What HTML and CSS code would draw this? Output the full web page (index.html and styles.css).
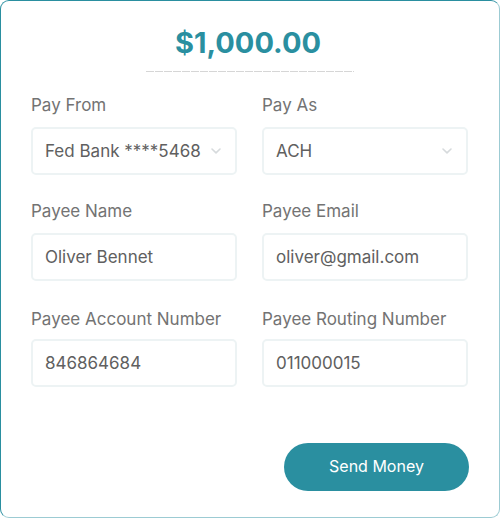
FILE: index.html
```html
<!DOCTYPE html>
<html>
<head>
<meta charset="utf-8">
<link rel="stylesheet" href="styles.css">
</head>
<body>
<div class="card">
  <div class="amount">$1,000.00</div>
  <div class="dash"></div>
  <div class="grid">
    <div class="field">
      <div class="label">Pay From</div>
      <div class="input select"><span>Fed Bank ****5468</span>
        <svg class="chev" width="12" height="8" viewBox="0 0 12 8"><path d="M2 2 L6 5.8 L10 2" fill="none" stroke="#d6dadc" stroke-width="1.6" stroke-linecap="round" stroke-linejoin="round"/></svg>
      </div>
    </div>
    <div class="field">
      <div class="label">Pay As</div>
      <div class="input select"><span>ACH</span>
        <svg class="chev" width="12" height="8" viewBox="0 0 12 8"><path d="M2 2 L6 5.8 L10 2" fill="none" stroke="#d6dadc" stroke-width="1.6" stroke-linecap="round" stroke-linejoin="round"/></svg>
      </div>
    </div>
    <div class="field">
      <div class="label">Payee Name</div>
      <div class="input"><span>Oliver Bennet</span></div>
    </div>
    <div class="field">
      <div class="label">Payee Email</div>
      <div class="input"><span>oliver@gmail.com</span></div>
    </div>
    <div class="field">
      <div class="label">Payee Account Number</div>
      <div class="input"><span>846864684</span></div>
    </div>
    <div class="field">
      <div class="label">Payee Routing Number</div>
      <div class="input"><span>011000015</span></div>
    </div>
  </div>
  <div class="actions">
    <button class="send">Send Money</button>
  </div>
</div>
</body>
</html>
```
FILE: styles.css
```css
* { box-sizing: border-box; }
html, body { margin: 0; padding: 0; background: #ffffff; }
body { font-family: Inter, "Noto Sans", sans-serif; }
.card {
  width: 500px;
  height: 518px;
  border: 1px solid #2a8fa0;
  border-right-color: #9ccbd3;
  border-bottom-color: #9ccbd3;
  border-radius: 9px;
  padding: 26px 30px 0 30px;
  background: #fff;
}
.amount {
  text-align: center;
  font-size: 29px;
  font-weight: 700;
  color: #2a8fa0;
  line-height: 32px;
  padding-right: 4px;
}
.dash {
  width: 208px;
  height: 1px;
  margin: 12px auto 0 auto;
  background: repeating-linear-gradient(90deg, #d6d6d6 0 8px, transparent 8px 9px);
}
.grid {
  display: grid;
  grid-template-columns: 206px 206px;
  column-gap: 25px;
  row-gap: 25px;
  margin-top: 22px;
}
.field:nth-child(n+5) .label { margin-top: 2px; margin-bottom: 9px; }
.label {
  font-size: 17px;
  color: #737373;
  line-height: 22px;
  margin-bottom: 11px;
}
.input {
  height: 48px;
  border: 2px solid #edf3f4;
  border-radius: 5px;
  display: flex;
  align-items: center;
  justify-content: space-between;
  padding: 0 12px;
  font-size: 17px;
  color: #606060;
}
.chev { margin-right: 1px; }
.actions {
  display: flex;
  justify-content: flex-end;
  margin-top: 56px;
}
.send {
  width: 185px;
  height: 48px;
  border: none;
  border-radius: 24px;
  background: #2a8fa0;
  color: #ffffff;
  font-family: Inter, "Noto Sans", sans-serif;
  font-size: 16px;
  font-weight: 400;
  padding: 0 0 3px 0;
}
```
